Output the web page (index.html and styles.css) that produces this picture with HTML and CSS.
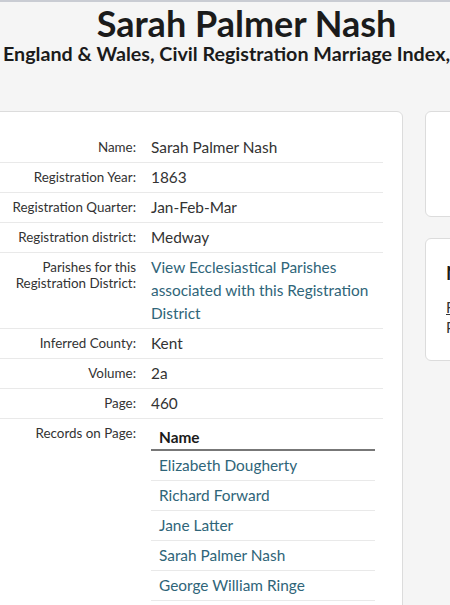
FILE: index.html
```html
<!DOCTYPE html>
<html lang="en">
<head>
<meta charset="utf-8">
<title>Sarah Palmer Nash</title>
<link rel="stylesheet" href="styles.css">
</head>
<body>
<div class="topline"></div>
<header class="hero">
  <h1 class="hero-title">Sarah Palmer Nash</h1>
  <h2 class="hero-sub">England &amp; Wales, Civil Registration Marriage Index, 1837-1915</h2>
</header>
<div class="layout">
  <main class="card record">
    <dl class="facts">
      <div class="row"><dt>Name:</dt><dd>Sarah Palmer Nash</dd></div>
      <div class="row"><dt>Registration Year:</dt><dd>1863</dd></div>
      <div class="row"><dt>Registration Quarter:</dt><dd>Jan-Feb-Mar</dd></div>
      <div class="row"><dt>Registration district:</dt><dd>Medway</dd></div>
      <div class="row"><dt>Parishes for this Registration District:</dt><dd><a href="#" class="link">View Ecclesiastical Parishes associated with this Registration District</a></dd></div>
      <div class="row"><dt>Inferred County:</dt><dd>Kent</dd></div>
      <div class="row"><dt>Volume:</dt><dd>2a</dd></div>
      <div class="row"><dt>Page:</dt><dd>460</dd></div>
      <div class="row last"><dt>Records on Page:</dt><dd>
        <table class="names">
          <thead><tr><th>Name</th></tr></thead>
          <tbody>
            <tr><td><a href="#" class="link">Elizabeth Dougherty</a></td></tr>
            <tr><td><a href="#" class="link">Richard Forward</a></td></tr>
            <tr><td><a href="#" class="link">Jane Latter</a></td></tr>
            <tr><td><a href="#" class="link">Sarah Palmer Nash</a></td></tr>
            <tr><td><a href="#" class="link">George William Ringe</a></td></tr>
          </tbody>
        </table>
      </dd></div>
    </dl>
  </main>
  <aside class="side">
    <div class="card side-card side-ad"></div>
    <div class="card side-card side-info">
      <h3 class="side-title">Nearby Records</h3>
      <a href="#" class="side-link">FreeBMD</a>
      <p class="side-text">Powered by</p>
    </div>
  </aside>
</div>
</body>
</html>
```
FILE: styles.css
```css
* { box-sizing: border-box; }
html, body { margin: 0; padding: 0; }
body {
  width: 450px;
  height: 605px;
  overflow: hidden;
  background: #f5f5f5;
  font-family: Lato, "Open Sans", sans-serif;
  color: #333;
}
.topline { height: 2px; background: #c9ccd3; }
.hero { height: 109px; }
.hero-title {
  margin: 0;
  padding: 1px 0 0 43px;
  text-align: center;
  font-size: 36px;
  line-height: 40px;
  font-weight: 700;
  color: #1b1b1b;
  white-space: nowrap;
}
.hero-sub {
  margin: 0;
  padding-left: 3px;
  font-size: 19.7px;
  line-height: 21px;
  font-weight: 700;
  color: #1b1b1b;
  white-space: nowrap;
  overflow: hidden;
}
.layout { display: flex; align-items: flex-start; }
.card {
  background: #fff;
  border: 1px solid #dcdcdc;
  border-radius: 6px;
}
.record {
  flex: none;
  width: 443px;
  margin-left: -40px;
  padding: 21px 19px 40px 20px;
}
.facts { margin: 0; }
.row {
  display: flex;
  gap: 15px;
  border-bottom: 1px solid #e9e9e9;
}
.row.last { border-bottom: none; }
.row dt {
  flex: none;
  width: 155px;
  text-align: right;
  font-size: 13.4px;
  line-height: 16px;
  padding: 6px 0 3px;
  color: #333;
}
.row dd {
  flex: 1;
  margin: 0;
  font-size: 15.4px;
  line-height: 23px;
  padding: 3px 0;
  color: #333;
}
.link { color: #2f6579; text-decoration: none; }
.names {
  width: 224px;
  border-collapse: collapse;
}
.names th {
  text-align: left;
  font-weight: 700;
  color: #1b1b1b;
  font-size: 15.4px;
  line-height: 22px;
  padding: 4px 8px 1px;
  border-bottom: 2px solid #777;
}
.names td {
  font-size: 15.4px;
  line-height: 22px;
  padding: 3px 8px 4px;
  border-bottom: 1px solid #e9e9e9;
}
.side {
  flex: none;
  width: 60px;
  margin-left: 22px;
  display: flex;
  flex-direction: column;
  gap: 21px;
}
.side-card { width: 200px; }
.side-ad { height: 106px; }
.side-info {
  height: 123px;
  padding: 22px 20px 0 20px;
  overflow: hidden;
  white-space: nowrap;
}
.side-title {
  margin: 0 0 12px;
  font-size: 19px;
  line-height: 24px;
  font-weight: 700;
  color: #1b1b1b;
}
.side-link {
  display: block;
  font-size: 15px;
  line-height: 20px;
  color: #333;
}
.side-text {
  margin: 0;
  font-size: 15px;
  line-height: 20px;
  color: #333;
}
```
